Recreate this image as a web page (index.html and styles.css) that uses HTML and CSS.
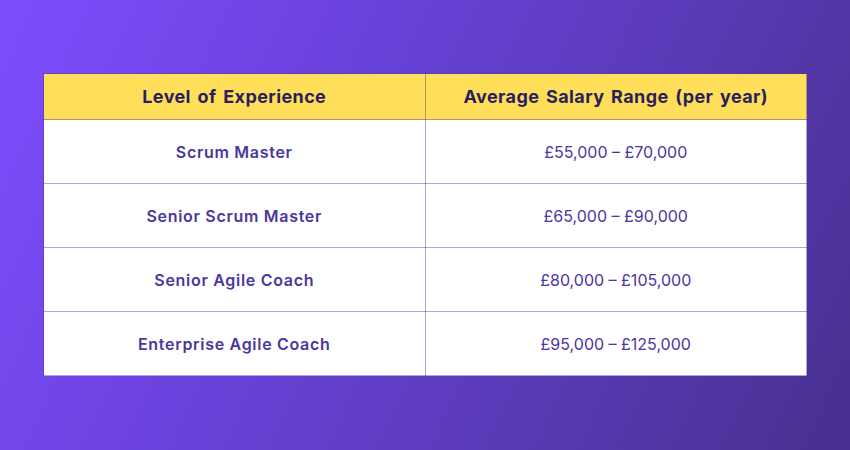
FILE: index.html
```html
<!DOCTYPE html>
<html lang="en">
<head>
<meta charset="utf-8">
<title>Salary Table</title>
<link rel="stylesheet" href="styles.css">
</head>
<body>
<main class="page">
  <table class="salary">
    <thead>
      <tr>
        <th>Level of Experience</th>
        <th>Average Salary Range (per year)</th>
      </tr>
    </thead>
    <tbody>
      <tr><td class="role">Scrum Master</td><td class="range">£55,000 – £70,000</td></tr>
      <tr><td class="role">Senior Scrum Master</td><td class="range">£65,000 – £90,000</td></tr>
      <tr><td class="role">Senior Agile Coach</td><td class="range">£80,000 – £105,000</td></tr>
      <tr><td class="role">Enterprise Agile Coach</td><td class="range">£95,000 – £125,000</td></tr>
    </tbody>
  </table>
</main>
</body>
</html>
```

FILE: styles.css
```css
html, body {
  margin: 0;
  padding: 0;
}
body {
  width: 850px;
  height: 450px;
  overflow: hidden;
  background: linear-gradient(115deg, #7e4dfd 0%, #6a42dc 35%, #5a3bb8 65%, #47308f 100%);
  font-family: "Inter", "Open Sans", sans-serif;
}
.page {
  padding: 73px 43px 0 43px;
}
.salary {
  width: 764px;
  border-collapse: collapse;
  table-layout: fixed;
}
.salary th,
.salary td {
  border: 1px solid rgba(78, 58, 160, 0.45);
  text-align: center;
  padding: 0;
}
.salary th {
  background: #ffde59;
  color: #2a1f5c;
  font-size: 18px;
  font-weight: 700;
  height: 45px;
  letter-spacing: 0.4px;
  word-spacing: 2px;
}
.salary td {
  background: #ffffff;
  color: #4a37a0;
  height: 63px;
  font-size: 16px;
}
.salary .role {
  font-weight: 600;
  letter-spacing: 0.7px;
}
.salary .range {
  font-weight: 400;
}
```
